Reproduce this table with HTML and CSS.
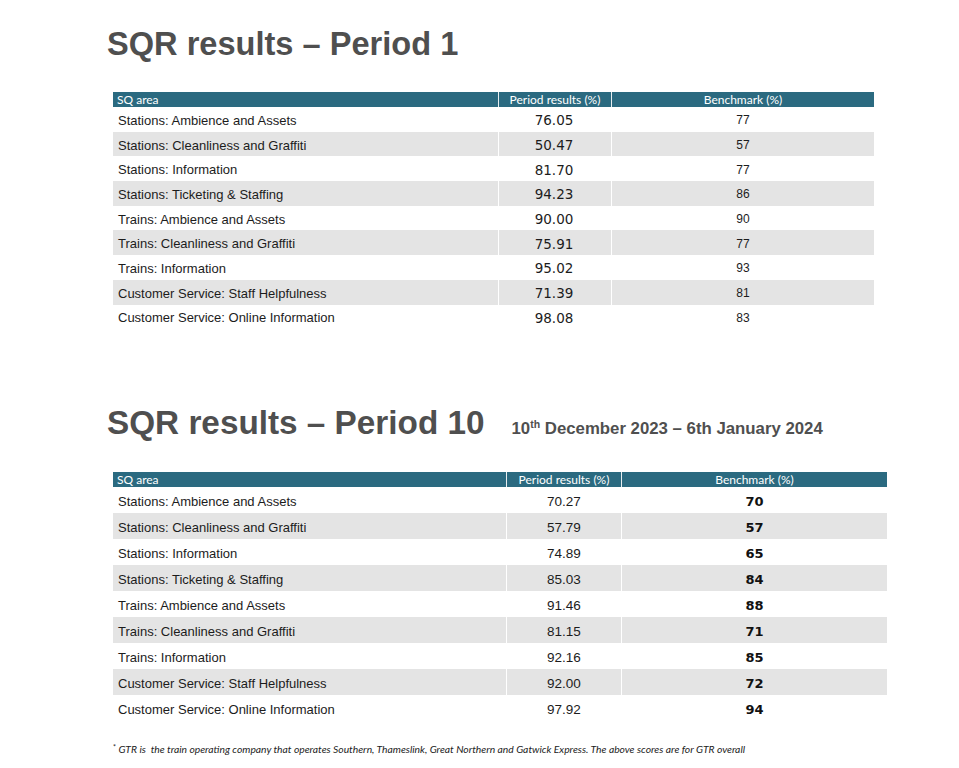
FILE: index.html
```html
<!DOCTYPE html>
<html lang="en">
<head>
<meta charset="utf-8">
<title>SQR results</title>
<link rel="stylesheet" href="styles.css">
</head>
<body>
<main class="page">
  <section class="sec sec-1">
    <h1 class="title t1">SQR results – Period 1</h1>
    <table class="sq sq-1">
      <colgroup><col class="c1"><col class="c2"><col class="c3"></colgroup>
      <thead>
        <tr><th class="h-left">SQ area</th><th>Period results (%)</th><th>Benchmark (%)</th></tr>
      </thead>
      <tbody>
        <tr><td class="area">Stations: Ambience and Assets</td><td class="res">76.05</td><td class="bm">77</td></tr>
        <tr class="alt"><td class="area">Stations: Cleanliness and Graffiti</td><td class="res">50.47</td><td class="bm">57</td></tr>
        <tr><td class="area">Stations: Information</td><td class="res">81.70</td><td class="bm">77</td></tr>
        <tr class="alt"><td class="area">Stations: Ticketing &amp; Staffing</td><td class="res">94.23</td><td class="bm">86</td></tr>
        <tr><td class="area">Trains: Ambience and Assets</td><td class="res">90.00</td><td class="bm">90</td></tr>
        <tr class="alt"><td class="area">Trains: Cleanliness and Graffiti</td><td class="res">75.91</td><td class="bm">77</td></tr>
        <tr><td class="area">Trains: Information</td><td class="res">95.02</td><td class="bm">93</td></tr>
        <tr class="alt"><td class="area">Customer Service: Staff Helpfulness</td><td class="res">71.39</td><td class="bm">81</td></tr>
        <tr><td class="area">Customer Service: Online Information</td><td class="res">98.08</td><td class="bm">83</td></tr>
      </tbody>
    </table>
  </section>

  <section class="sec sec-2">
    <div class="title-row">
      <h1 class="title t2">SQR results – Period 10</h1>
      <p class="dates">10<sup>th</sup> December 2023 – 6th January 2024</p>
    </div>
    <table class="sq sq-2">
      <colgroup><col class="c1"><col class="c2"><col class="c3"></colgroup>
      <thead>
        <tr><th class="h-left">SQ area</th><th>Period results (%)</th><th>Benchmark (%)</th></tr>
      </thead>
      <tbody>
        <tr><td class="area">Stations: Ambience and Assets</td><td class="res">70.27</td><td class="bm">70</td></tr>
        <tr class="alt"><td class="area">Stations: Cleanliness and Graffiti</td><td class="res">57.79</td><td class="bm">57</td></tr>
        <tr><td class="area">Stations: Information</td><td class="res">74.89</td><td class="bm">65</td></tr>
        <tr class="alt"><td class="area">Stations: Ticketing &amp; Staffing</td><td class="res">85.03</td><td class="bm">84</td></tr>
        <tr><td class="area">Trains: Ambience and Assets</td><td class="res">91.46</td><td class="bm">88</td></tr>
        <tr class="alt"><td class="area">Trains: Cleanliness and Graffiti</td><td class="res">81.15</td><td class="bm">71</td></tr>
        <tr><td class="area">Trains: Information</td><td class="res">92.16</td><td class="bm">85</td></tr>
        <tr class="alt"><td class="area">Customer Service: Staff Helpfulness</td><td class="res">92.00</td><td class="bm">72</td></tr>
        <tr><td class="area">Customer Service: Online Information</td><td class="res">97.92</td><td class="bm">94</td></tr>
      </tbody>
    </table>
    <p class="note"><span class="star">*</span> GTR is&nbsp; the train operating company that operates Southern, Thameslink, Great Northern and Gatwick Express. The above scores are for GTR overall</p>
  </section>
</main>
</body>
</html>
```

FILE: styles.css
```css
html, body {
  margin: 0;
  padding: 0;
  background: #ffffff;
}

.page {
  width: 959px;
  height: 768px;
  box-sizing: border-box;
  padding: 25px 0 0 0;
  font-family: "Liberation Sans", Arial, sans-serif;
  color: #1c1c1c;
  overflow: hidden;
}

.sec {
  display: flex;
  flex-direction: column;
}

.title {
  margin: 0 0 0 107px;
  line-height: 38px;
  font-weight: bold;
  color: #4f4f4f;
  white-space: nowrap;
}

.t1 { font-size: 32.6px; }
.t2 { font-size: 33.3px; }

.sq {
  border-collapse: separate;
  border-spacing: 0;
  table-layout: fixed;
  margin-left: 113px;
}

.sq-1 { width: 761px; margin-top: 29px; }
.sq-1 .c1 { width: 385px; }
.sq-1 .c2 { width: 113px; }
.sq-1 .c3 { width: 263px; }

.sq-2 { width: 774px; margin-top: 30px; }
.sq-2 .c1 { width: 393px; }
.sq-2 .c2 { width: 115px; }
.sq-2 .c3 { width: 266px; }

.sq th {
  background: #2b6a80;
  color: #ffffff;
  font-family: Lato, "Open Sans", sans-serif;
  font-weight: normal;
  font-size: 12px;
  height: 15px;
  line-height: 15px;
  padding: 0;
  text-align: center;
  border-left: 1px solid #e8eef0;
}

.sq th.h-left {
  text-align: left;
  padding-left: 4px;
  border-left: none;
}

.sq td {
  border-left: 1px solid #ffffff;
  white-space: nowrap;
  box-sizing: border-box;
}

.sq td.area {
  border-left: none;
  font-size: 13px;
  text-align: left;
}

.sq-1 td { height: 24.7px; padding: 2px 0 0 0; }
.sq-2 td { height: 26px; padding: 2px 0 0 0; }
.sq td.area { padding-left: 5px; }

.sq tr.alt td {
  background: #e4e4e4;
}

.sq td.res,
.sq td.bm {
  text-align: center;
}

.sq-1 td.res {
  font-family: "DejaVu Sans", Verdana, sans-serif;
  font-size: 13.5px;
  padding-right: 2px;
}

.sq-1 td.bm {
  font-size: 12px;
}

.sq-2 td.res {
  font-size: 13.5px;
}

.sq-2 td.bm {
  font-family: "DejaVu Sans", Verdana, sans-serif;
  font-weight: bold;
  font-size: 13px;
  color: #111111;
}

.sec-2 {
  margin-top: 75px;
}

.title-row {
  display: flex;
  align-items: baseline;
}

.dates {
  margin: 0 0 0 27px;
  font-size: 16.8px;
  font-weight: bold;
  color: #4f4f4f;
  white-space: nowrap;
}

.dates sup {
  font-size: 10.5px;
  line-height: 0;
  vertical-align: 6px;
}

.note {
  margin: 20px 0 0 113px;
  font-family: Lato, "Open Sans", sans-serif;
  font-style: italic;
  font-size: 10.3px;
  line-height: 12px;
  color: #222222;
  white-space: nowrap;
}

.note .star {
  font-style: normal;
  font-size: 7px;
  vertical-align: 3px;
}
```
